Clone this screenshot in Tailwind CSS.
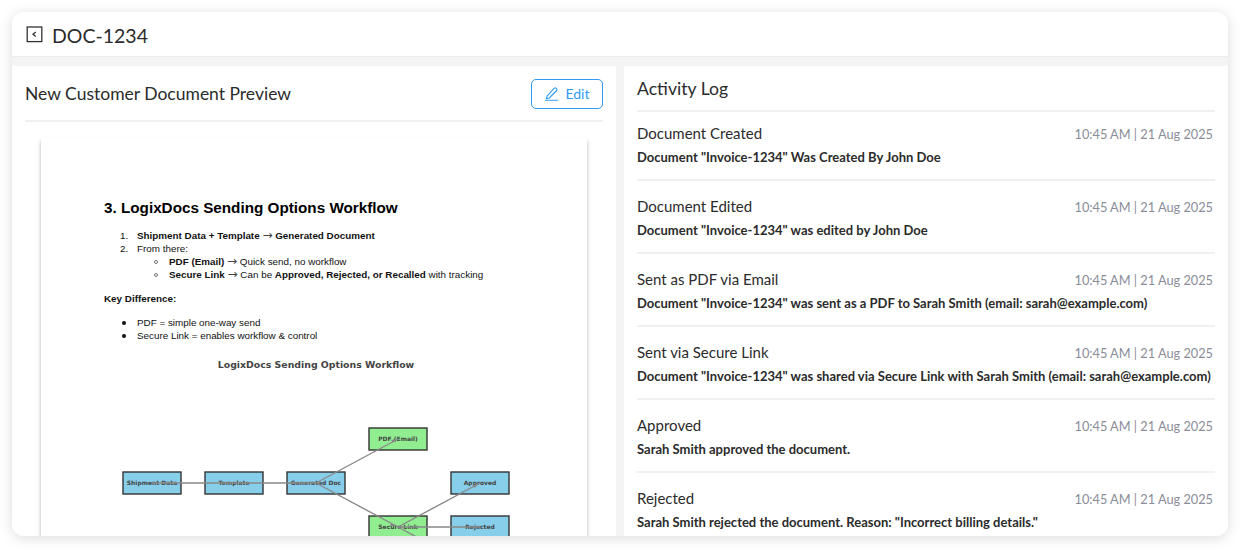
<!DOCTYPE html>
<html lang="en">
<head>
  <meta charset="UTF-8" />
  <title>DOC-1234</title>
  <script src="https://cdn.jsdelivr.net/npm/@tailwindcss/browser@4"></script>
</head>
<body class="bg-white w-[1252px] h-[560px] overflow-hidden font-['Lato',sans-serif] text-[#2b2b2b]">
  <div class="mx-3 mt-3 w-[1216px] h-[524px] bg-white rounded-xl shadow-[0_2px_14px_rgba(0,0,0,0.14)] overflow-hidden flex flex-col">
    <header class="h-[45px] shrink-0 flex items-center gap-[9px] pl-[14px] pt-[4px] border-b border-[#ececec]">
      <svg class="-mt-[4px]" width="17" height="17" viewBox="0 0 17 17" fill="none" stroke="#333" stroke-width="1.3">
        <rect x="1.2" y="1" width="14.6" height="14.6" />
        <path d="M9.8 6 7 8.3l2.8 2.3" />
      </svg>
      <h1 class="text-[19.5px] leading-none">DOC-1234</h1>
    </header>

    <div class="flex-1 min-h-0 flex gap-[8px] bg-[#f4f4f4] pt-[9px]">
      <section class="w-[604px] bg-white px-[13px] overflow-hidden">
        <div class="h-[56px] flex items-center justify-between border-b-2 border-[#f0f0f0]">
          <h2 class="text-[17.5px] mt-[3px]">New Customer Document Preview</h2>
          <button class="w-[72px] h-[30px] mt-[1px] flex items-center justify-center gap-[6px] border border-[#2f9bf4] rounded-[5px] text-[#2f9bf4] text-[14px]">
            <svg width="15" height="15" viewBox="0 0 15 15" fill="none" stroke="#2f9bf4" stroke-width="1.1">
              <path d="M3 10.2 10.4 2.2c.5-.5 1.1-.5 1.6 0l.7.7c.5.5.5 1.1 0 1.6L5.3 12l-2.8.5z" />
              <path d="M1 14.2h13" />
            </svg>
            Edit
          </button>
        </div>

        <div class="mt-[16px] mx-[16px] w-[546px] h-[420px] bg-white shadow-[0_3px_4px_rgba(0,0,0,0.3)] pt-[60px] font-['Liberation_Sans',sans-serif] text-[9.85px] leading-[13px] text-[#111]">
          <div class="pl-[63px]">
            <h3 class="text-[15.25px] leading-[20px] font-bold text-black">3. LogixDocs Sending Options Workflow</h3>
            <ol class="mt-[11px] pl-[16px]">
              <li class="flex"><span class="w-[17px]">1.</span><span><b>Shipment Data + Template</b> <span class="font-['DejaVu_Sans'] text-[12px] leading-none text-[#444]">→</span> <b>Generated Document</b></span></li>
              <li class="flex"><span class="w-[17px]">2.</span><span>From there:</span></li>
              <li class="flex items-center pl-[33px]"><span class="w-[4px] h-[4px] rounded-full border border-[#777] mr-[11px] ml-[1px]"></span><span><b>PDF (Email)</b> <span class="font-['DejaVu_Sans'] text-[12px] leading-none text-[#444]">→</span> Quick send, no workflow</span></li>
              <li class="flex items-center pl-[33px]"><span class="w-[4px] h-[4px] rounded-full border border-[#777] mr-[11px] ml-[1px]"></span><span><b>Secure Link</b> <span class="font-['DejaVu_Sans'] text-[12px] leading-none text-[#444]">→</span> Can be <b>Approved, Rejected, or Recalled</b> with tracking</span></li>
            </ol>
            <p class="mt-[11px] font-bold">Key Difference:</p>
            <ul class="mt-[11px] pl-[18px]">
              <li class="flex items-center"><span class="w-[4px] h-[4px] rounded-full bg-[#111] mr-[11px]"></span>PDF = simple one-way send</li>
              <li class="flex items-center"><span class="w-[4px] h-[4px] rounded-full bg-[#111] mr-[11px]"></span>Secure Link = enables workflow &amp; control</li>
            </ul>
          </div>
          <svg class="block mt-[9px]" width="546" height="190" viewBox="0 0 546 190" font-family="DejaVu Sans, sans-serif" font-weight="700" font-size="6" text-anchor="middle" fill="#444">
            <text x="275" y="17" font-size="9.35">LogixDocs Sending Options Workflow</text>
            <g stroke="#333" stroke-width="1.4">
              <rect x="82" y="121" width="58" height="22" fill="#87ceeb" />
              <rect x="164" y="121" width="58" height="22" fill="#87ceeb" />
              <rect x="246" y="121" width="58" height="22" fill="#87ceeb" />
              <rect x="328" y="77" width="58" height="22" fill="#90ee90" />
              <rect x="410" y="121" width="58" height="22" fill="#87ceeb" />
              <rect x="328" y="165" width="58" height="22" fill="#90ee90" />
              <rect x="410" y="165" width="58" height="22" fill="#87ceeb" />
            </g>
            <text x="111" y="134">Shipment Data</text>
            <text x="193" y="134">Template</text>
            <text x="275" y="134">Generated Doc</text>
            <text x="357" y="90">PDF (Email)</text>
            <text x="439" y="134">Approved</text>
            <text x="357" y="178">Secure Link</text>
            <text x="439" y="178">Rejected</text>
            <g stroke="#888" stroke-width="1.4" fill="none">
              <path d="M111 132H275" />
              <path d="M275 132 357 88" />
              <path d="M275 132 357 176" />
              <path d="M357 176 439 132" />
              <path d="M357 176H439" />
              <path d="M357 176 440 221" />
            </g>
            <g fill="#888">
              <path d="M273 132l6-1v2z" />
              <path d="M355 88l-5 1 2 3z" />
              <path d="M355 175l-5-3-1 3z" />
              <path d="M437 133l-5 1 2 3z" />
            </g>
          </svg>
        </div>
      </section>

      <section class="flex-1 bg-white px-[13px] overflow-hidden">
        <h2 class="h-[46px] pt-[11px] text-[17.6px] leading-[24px] border-b-2 border-[#f0f0f0]">Activity Log</h2>
        <ul>
          <li class="h-[69px] border-b-2 border-[#f0f0f0] pt-[12px]">
            <div class="flex justify-between items-center pr-[2px]"><span class="text-[15px] leading-[20px] -translate-y-px">Document Created</span><span class="text-[12.75px] leading-[20px] text-[#8a8d99]">10:45 AM | 21 Aug 2025</span></div>
            <p class="mt-[4px] text-[13px] leading-[18px] font-bold">Document "Invoice-1234" Was Created By John Doe</p>
          </li>
          <li class="h-[73px] border-b-2 border-[#f0f0f0] pt-[16px]">
            <div class="flex justify-between items-center pr-[2px]"><span class="text-[15px] leading-[20px] -translate-y-px">Document Edited</span><span class="text-[12.75px] leading-[20px] text-[#8a8d99]">10:45 AM | 21 Aug 2025</span></div>
            <p class="mt-[4px] text-[13px] leading-[18px] font-bold">Document "Invoice-1234" was edited by John Doe</p>
          </li>
          <li class="h-[73px] border-b-2 border-[#f0f0f0] pt-[16px]">
            <div class="flex justify-between items-center pr-[2px]"><span class="text-[15px] leading-[20px] -translate-y-px">Sent as PDF via Email</span><span class="text-[12.75px] leading-[20px] text-[#8a8d99]">10:45 AM | 21 Aug 2025</span></div>
            <p class="mt-[4px] text-[13px] leading-[18px] font-bold">Document "Invoice-1234" was sent as a PDF to Sarah Smith (email: sarah@example.com)</p>
          </li>
          <li class="h-[73px] border-b-2 border-[#f0f0f0] pt-[16px]">
            <div class="flex justify-between items-center pr-[2px]"><span class="text-[15px] leading-[20px] -translate-y-px">Sent via Secure Link</span><span class="text-[12.75px] leading-[20px] text-[#8a8d99]">10:45 AM | 21 Aug 2025</span></div>
            <p class="mt-[4px] text-[13px] leading-[18px] font-bold">Document "Invoice-1234" was shared via Secure Link with Sarah Smith (email: sarah@example.com)</p>
          </li>
          <li class="h-[73px] border-b-2 border-[#f0f0f0] pt-[16px]">
            <div class="flex justify-between items-center pr-[2px]"><span class="text-[15px] leading-[20px] -translate-y-px">Approved</span><span class="text-[12.75px] leading-[20px] text-[#8a8d99]">10:45 AM | 21 Aug 2025</span></div>
            <p class="mt-[4px] text-[13px] leading-[18px] font-bold">Sarah Smith approved the document.</p>
          </li>
          <li class="h-[73px] pt-[16px]">
            <div class="flex justify-between items-center pr-[2px]"><span class="text-[15px] leading-[20px] -translate-y-px">Rejected</span><span class="text-[12.75px] leading-[20px] text-[#8a8d99]">10:45 AM | 21 Aug 2025</span></div>
            <p class="mt-[4px] text-[13px] leading-[18px] font-bold">Sarah Smith rejected the document. Reason: "Incorrect billing details."</p>
          </li>
        </ul>
      </section>
    </div>
  </div>
</body>
</html>
